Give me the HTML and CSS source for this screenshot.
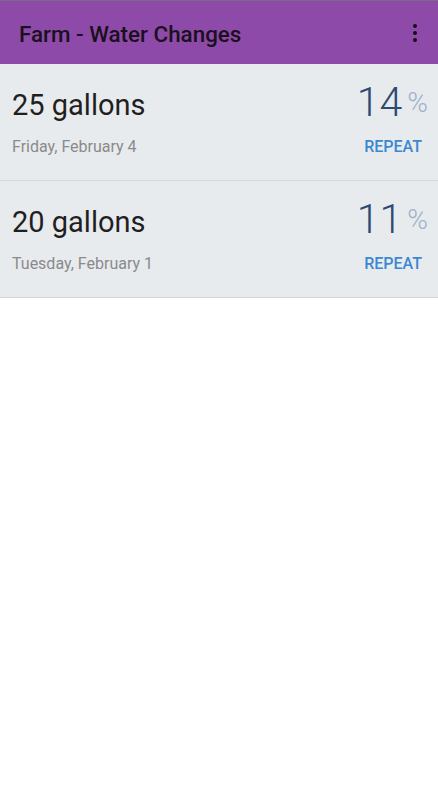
FILE: index.html
```html
<!DOCTYPE html>
<html>
<head>
<meta charset="utf-8">
<link rel="stylesheet" href="styles.css">
</head>
<body>
<div class="app">
  <header class="bar">
    <h1 class="title">Farm - Water Changes</h1>
    <div class="menu"><span></span><span></span><span></span></div>
  </header>
  <ul class="list">
    <li class="row">
      <div class="left">
        <div class="amount">25 gallons</div>
        <div class="date">Friday, February 4</div>
      </div>
      <div class="right">
        <div class="pct"><span class="num">14</span><span class="sym">%</span></div>
        <div class="repeat">REPEAT</div>
      </div>
    </li>
    <li class="row">
      <div class="left">
        <div class="amount">20 gallons</div>
        <div class="date">Tuesday, February 1</div>
      </div>
      <div class="right">
        <div class="pct"><span class="num">11</span><span class="sym">%</span></div>
        <div class="repeat">REPEAT</div>
      </div>
    </li>
  </ul>
</div>
</body>
</html>
```
FILE: styles.css
```css
html, body {
  margin: 0;
  padding: 0;
  background: #ffffff;
  font-family: Roboto, "Noto Sans", sans-serif;
}
.app {
  width: 438px;
}
.bar {
  height: 64px;
  background: #8e4aa8;
  border-top: 1px solid #7d6a86;
  box-sizing: border-box;
  display: flex;
  align-items: center;
  justify-content: space-between;
  padding: 0 19px 0 19px;
}
.title {
  margin: 0;
  font-size: 22.4px;
  font-weight: 500;
  color: #1a1020;
  line-height: 28px;
  padding-top: 2px;
}
.menu {
  display: flex;
  flex-direction: column;
  gap: 3px;
  margin-right: 2px;
}
.menu span {
  width: 4px;
  height: 4px;
  border-radius: 50%;
  background: #111;
}
.list {
  list-style: none;
  margin: 0;
  padding: 0;
}
.row {
  background: #e8ebee;
  border-bottom: 1px solid #d5d8db;
  height: 117px;
  box-sizing: border-box;
  display: flex;
  justify-content: space-between;
  padding: 0 16px 0 12px;
}
.left, .right {
  display: flex;
  flex-direction: column;
}
.right {
  align-items: flex-end;
}
.amount {
  font-size: 29px;
  color: #1f1f1f;
  margin-top: 23px;
  line-height: 36px;
}
.date {
  font-size: 16px;
  color: #8a8a8a;
  margin-top: 14px;
  line-height: 20px;
}
.pct {
  margin-top: 14px;
  margin-right: -6px;
  font-size: 41px;
  line-height: 48px;
  height: 48px;
}
.num {
  font-weight: 300;
  color: #2d4b70;
}
.sym {
  font-size: 28px;
  line-height: 1;
  font-weight: 300;
  color: #9db1c9;
  margin-left: 5px;
  position: relative;
  top: -4px;
}
.repeat {
  font-size: 16px;
  font-weight: 500;
  color: #3b88d2;
  margin-top: 11px;
  line-height: 20px;
}
```
